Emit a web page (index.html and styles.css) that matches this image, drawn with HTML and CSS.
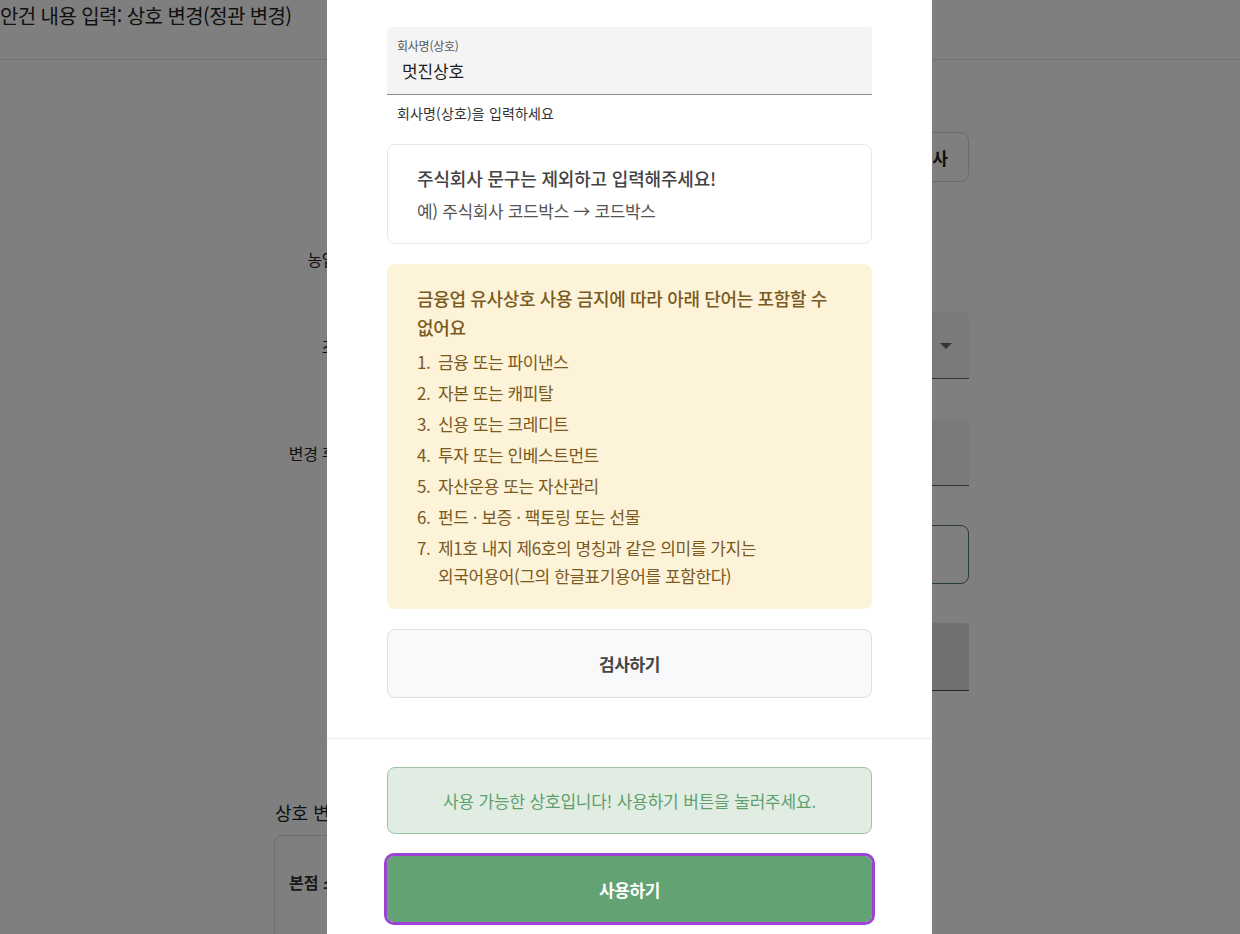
FILE: index.html
```html
<!DOCTYPE html>
<html lang="ko">
<head>
<meta charset="utf-8">
<title>상호 변경</title>
<link rel="stylesheet" href="styles.css">
</head>
<body>
<div class="page">
  <header class="page-header">
    <h1 class="page-title">안건 내용 입력: 상호 변경(정관 변경)</h1>
  </header>
  <main class="page-main">
    <div class="row row-top">
      <div class="spacer"></div>
      <button class="bg-btn">등기부 검사</button>
    </div>
    <div class="row row-label-only">
      <div class="bg-label">농업인</div>
    </div>
    <div class="row row-field">
      <div class="bg-label">조</div>
      <div class="bg-select"><span class="caret"></span></div>
    </div>
    <div class="row row-field row-input">
      <div class="bg-label">변경 후 상호</div>
      <div class="bg-input"></div>
    </div>
    <div class="row row-box">
      <div class="bg-label"></div>
      <div class="bg-outline"></div>
    </div>
    <div class="row row-dark">
      <div class="bg-label"></div>
      <div class="bg-dark"></div>
    </div>
    <h2 class="bg-section">상호 변경 내역</h2>
    <div class="bg-table">
      <div class="bg-table-row">본점 소재지</div>
    </div>
  </main>
</div>
<div class="overlay"></div>

<div class="modal" role="dialog">
  <div class="modal-body">
    <div class="field">
      <label class="field-label">회사명(상호)</label>
      <div class="field-value">멋진상호</div>
    </div>
    <p class="helper">회사명(상호)을 입력하세요</p>

    <div class="notice">
      <p class="notice-title">주식회사 문구는 제외하고 입력해주세요!</p>
      <p class="notice-text">예) 주식회사 코드박스 → 코드박스</p>
    </div>

    <div class="warn">
      <p class="warn-title">금융업 유사상호 사용 금지에 따라 아래 단어는 포함할 수 없어요</p>
      <ol class="warn-list">
        <li><span class="num">1.</span><span>금융 또는 파이낸스</span></li>
        <li><span class="num">2.</span><span>자본 또는 캐피탈</span></li>
        <li><span class="num">3.</span><span>신용 또는 크레디트</span></li>
        <li><span class="num">4.</span><span>투자 또는 인베스트먼트</span></li>
        <li><span class="num">5.</span><span>자산운용 또는 자산관리</span></li>
        <li><span class="num">6.</span><span>펀드 · 보증 · 팩토링 또는 선물</span></li>
        <li><span class="num">7.</span><span>제1호 내지 제6호의 명칭과 같은 의미를 가지는 <span class="nowrap">외국어용어(그의</span> 한글표기용어를 포함한다)</span></li>
      </ol>
    </div>

    <button class="check-btn">검사하기</button>
  </div>
  <div class="modal-footer">
    <div class="success">사용 가능한 상호입니다! 사용하기 버튼을 눌러주세요.</div>
    <button class="use-btn">사용하기</button>
  </div>
</div>
</body>
</html>
```

FILE: styles.css
```css
* { box-sizing: border-box; }
html, body { margin: 0; padding: 0; }
body {
  width: 1240px;
  height: 934px;
  overflow: hidden;
  background: #ffffff;
  font-family: "Noto Sans CJK KR", "Noto Sans", sans-serif;
  color: #222;
  word-break: keep-all;
}
p { margin: 0; }
.nowrap { white-space: nowrap; }

/* background page */
.page-header {
  height: 60px;
  border-bottom: 1px solid #e2e2e2;
}
.page-title {
  margin: 0;
  padding-top: 2px;
  font-size: 20px;
  font-weight: 400;
  line-height: 28px;
  letter-spacing: -0.03em;
  color: #222;
}
.page-main {
  width: 695px;
  margin-left: 274px;
}
.row { display: flex; align-items: center; }
.spacer { flex: 1; }
.row-top { margin-top: 72px; }
.bg-btn {
  width: 120px;
  height: 50px;
  border: 1px solid #d6d6d6;
  border-radius: 8px;
  background: #fff;
  font-family: inherit;
  font-size: 17px;
  font-weight: 700;
  color: #222;
  text-align: right;
  padding-right: 20px;
}
.bg-label {
  width: 110px;
  text-align: center;
  font-size: 16px;
  color: #222;
  letter-spacing: -0.02em;
}
.row-label-only { margin-top: 64px; height: 26px; }
.row-label-only + .row-field { margin-top: 40px; }
.bg-select {
  flex: 1;
  margin-left: 60px;
  height: 67px;
  background: #f4f4f4;
  border-bottom: 1px solid #666;
  border-radius: 4px 4px 0 0;
  position: relative;
}
.caret {
  position: absolute;
  right: 17px;
  top: 31px;
  border-left: 6px solid transparent;
  border-right: 6px solid transparent;
  border-top: 6px solid #666;
}
.row-input { margin-top: 40px; }
.bg-input {
  flex: 1;
  margin-left: 60px;
  height: 67px;
  background: #f4f4f4;
  border-bottom: 1px solid #666;
  border-radius: 4px 4px 0 0;
}
.row-box { margin-top: 39px; }
.bg-outline {
  flex: 1;
  margin-left: 60px;
  height: 59px;
  border: 1px solid #4f7c5a;
  border-radius: 8px;
}
.row-dark { margin-top: 39px; }
.bg-dark {
  flex: 1;
  margin-left: 60px;
  height: 68px;
  background: #e3e3e3;
  border-bottom: 1px solid #555;
  border-radius: 4px 4px 0 0;
}
.bg-section {
  margin: 109px 0 0 1px;
  font-size: 18px;
  font-weight: 400;
  line-height: 24px;
  color: #222;
}
.bg-table {
  margin-top: 11px;
  width: 620px;
  border: 1px solid #ddd;
  border-radius: 8px;
  height: 140px;
}
.bg-table-row {
  padding: 34px 0 0 14px;
  font-size: 16px;
  font-weight: 700;
  color: #333;
}

.overlay {
  position: fixed;
  inset: 0;
  background: rgba(0, 0, 0, 0.5);
}

/* modal */
.modal {
  position: fixed;
  left: 327px;
  top: 0;
  width: 605px;
  height: 960px;
  background: #ffffff;
  display: flex;
  flex-direction: column;
}
.modal-body {
  padding: 27px 60px 40px;
  display: flex;
  flex-direction: column;
}
.field {
  height: 68px;
  background: #f4f4f4;
  border-bottom: 1px solid #8c8c8c;
  border-radius: 4px 4px 0 0;
  padding: 11px 12px 0 10px;
}
.field-label {
  display: block;
  font-size: 12px;
  line-height: 16px;
  color: #555;
  letter-spacing: -0.02em;
}
.field-value {
  margin-top: 5px;
  padding-left: 5px;
  font-size: 17px;
  line-height: 24px;
  color: #1e1e1e;
  letter-spacing: -0.01em;
}
.helper {
  margin-top: 8px;
  padding-left: 10px;
  font-size: 14px;
  line-height: 20px;
  color: #333;
  letter-spacing: 0.01em;
}
.notice {
  margin-top: 21px;
  border: 1px solid #e8e8e8;
  border-radius: 8px;
  padding: 20px 29px 19px;
}
.notice-title {
  font-size: 18px;
  line-height: 26px;
  font-weight: 500;
  color: #444;
  letter-spacing: -0.01em;
}
.notice-text {
  margin-top: 7px;
  font-size: 17px;
  line-height: 26px;
  color: #555;
  letter-spacing: -0.02em;
}
.warn {
  margin-top: 20px;
  background: #fdf3d9;
  border-radius: 8px;
  padding: 20px 30px 19px;
  color: #7a5a1e;
}
.warn-title {
  font-size: 18px;
  line-height: 29px;
  font-weight: 500;
  letter-spacing: -0.02em;
}
.warn-list {
  list-style: none;
  margin: 6px 0 0;
  padding: 0;
}
.warn-list li {
  display: flex;
  font-size: 17px;
  line-height: 28px;
  letter-spacing: -0.025em;
}
.warn-list li + li { margin-top: 3px; }
.num { width: 21px; flex: none; }
.check-btn {
  margin-top: 20px;
  height: 69px;
  background: #f8f9fa;
  border: 1px solid #dedfe0;
  border-radius: 8px;
  font-family: inherit;
  font-size: 17px;
  font-weight: 700;
  color: #444;
  letter-spacing: -0.02em;
}
.modal-footer {
  border-top: 1px solid #eeeeee;
  padding: 28px 60px;
  display: flex;
  flex-direction: column;
}
.success {
  height: 67px;
  background: #e1ede3;
  border: 1px solid #9cc5a5;
  border-radius: 8px;
  display: flex;
  align-items: center;
  justify-content: center;
  font-size: 17px;
  color: #5f9f6f;
  letter-spacing: -0.01em;
}
.use-btn {
  margin-top: 22px;
  height: 66px;
  background: #62a273;
  border: none;
  border-radius: 7px;
  outline: 3px solid #9c42d4;
  font-family: inherit;
  font-size: 17px;
  font-weight: 700;
  color: #ffffff;
  letter-spacing: -0.02em;
}
```
